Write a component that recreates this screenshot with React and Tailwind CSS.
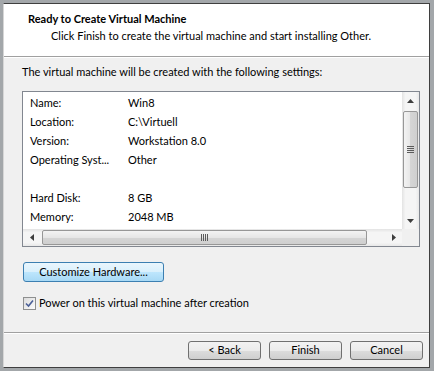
import React from 'react';

const settings = [
  ['Name:', 'Win8'],
  ['Location:', 'C:\\Virtuell'],
  ['Version:', 'Workstation 8.0'],
  ['Operating Syst...', 'Other'],
  ['', ''],
  ['Hard Disk:', '8 GB'],
  ['Memory:', '2048 MB'],
];

const Arrow = ({ dir }) => {
  // tiny black triangles used by the classic scrollbar buttons
  const paths = {
    up: 'M0 4 L3.5 0 L7 4 Z',
    down: 'M0 0 L7 0 L3.5 4 Z',
    left: 'M4 0 L4 7 L0 3.5 Z',
    right: 'M0 0 L4 3.5 L0 7 Z',
  };
  const vert = dir === 'up' || dir === 'down';
  return (
    <svg width={vert ? 7 : 4} height={vert ? 4 : 7} viewBox={vert ? '0 0 7 4' : '0 0 4 7'}>
      <path d={paths[dir]} fill="#3e3e3e" />
    </svg>
  );
};

const WinButton = ({ children, primary }) => (
  <button
    className={
      primary
        ? 'h-[20px] w-[141px] rounded-[3px] border border-[#3c7fb1] bg-[linear-gradient(#eaf6fd_0%,#d9f0fc_50%,#bee6fd_50%,#a7d9f5_100%)] text-[11px] text-black'
        : 'h-[19px] w-[73px] rounded-[3px] border border-[#707070] bg-[linear-gradient(#f2f2f2_0%,#ebebeb_50%,#dddddd_50%,#cfcfcf_100%)] text-[11px] text-black'
    }
  >
    {children}
  </button>
);

export default function App() {
  return (
    <div
      className="w-[434px] h-[371px] overflow-hidden bg-[#a3a7aa] pt-[3px] pl-[3px] pr-[4px] pb-[3px]"
      style={{ fontFamily: 'Lato, "Noto Sans", sans-serif' }}
    >
      <div className="flex h-full flex-col border-t border-r border-b border-l border-t-[#3f3f3f] border-r-[#3f3f3f] border-b-[#3f3f3f] border-l-[#d6d6d6] bg-[#f0f0f0]">
        {/* header */}
        <div className="h-[52px] bg-white pl-[24px] pt-[7px]">
          <div className="text-[11px] font-bold leading-[16px] text-black">Ready to Create Virtual Machine</div>
          <div className="mt-[1px] pl-[23px] text-[11px] leading-[16px] text-black">
            Click Finish to create the virtual machine and start installing Other.
          </div>
        </div>
        <div className="h-px bg-[#a0a0a0]" />
        <div className="h-px bg-white" />

        {/* body */}
        <div className="flex flex-1 flex-col pl-[18px] pt-[6px]">
          <div className="text-[11px] leading-[16px] text-black">
            The virtual machine will be created with the following settings:
          </div>

          <div className="mt-[11px] h-[156px] w-[398px] border border-[#828790] bg-white">
            <div className="grid h-full grid-cols-[379px_17px] grid-rows-[137px_17px]">
              <div className="overflow-hidden pl-[7px] pt-[2px]">
                {settings.map(([k, v], i) => (
                  <div key={i} className="flex h-[19px] items-center text-[11px] text-black">
                    <span className="w-[98px] shrink-0">{k}</span>
                    <span>{v}</span>
                  </div>
                ))}
              </div>

              {/* vertical scrollbar */}
              <div className="flex flex-col bg-[linear-gradient(90deg,#e3e3e3,#f5f5f5_20%,#f5f5f5_80%,#e8e8e8)]">
                <div className="flex h-[17px] items-center justify-center">
                  <Arrow dir="up" />
                </div>
                <div className="mx-[1px] mt-[2px] flex h-[77px] items-center justify-center rounded-[2px] border border-[#979797] bg-[linear-gradient(90deg,#f3f3f3,#e6e6e6_50%,#d5d5d5_50%,#cfcfcf)]">
                  <div className="flex flex-col gap-[1px]">
                    <div className="h-px w-[7px] bg-[#5b5b5b]" />
                    <div className="h-px w-[7px] bg-[#5b5b5b]" />
                    <div className="h-px w-[7px] bg-[#5b5b5b]" />
                    <div className="h-px w-[7px] bg-[#5b5b5b]" />
                  </div>
                </div>
                <div className="flex-1" />
                <div className="flex h-[17px] items-center justify-center">
                  <Arrow dir="down" />
                </div>
              </div>

              {/* horizontal scrollbar */}
              <div className="flex items-stretch bg-[linear-gradient(#e3e3e3,#f5f5f5_20%,#f5f5f5_80%,#e8e8e8)]">
                <div className="flex w-[17px] items-center justify-center">
                  <Arrow dir="left" />
                </div>
                <div className="my-[1px] ml-[2px] flex w-[325px] items-center justify-center rounded-[2px] border border-[#979797] bg-[linear-gradient(#f3f3f3,#e6e6e6_50%,#d5d5d5_50%,#cfcfcf)]">
                  <div className="flex gap-[1px]">
                    <div className="h-[7px] w-px bg-[#5b5b5b]" />
                    <div className="h-[7px] w-px bg-[#5b5b5b]" />
                    <div className="h-[7px] w-px bg-[#5b5b5b]" />
                    <div className="h-[7px] w-px bg-[#5b5b5b]" />
                  </div>
                </div>
                <div className="flex-1" />
                <div className="flex w-[17px] items-center justify-center">
                  <Arrow dir="right" />
                </div>
              </div>
              <div className="bg-[#f0f0f0]" />
            </div>
          </div>

          <div className="mt-[15px] ml-[1px] flex">
            <WinButton primary>Customize Hardware...</WinButton>
          </div>

          <label className="mt-[14px] ml-[1px] flex items-center gap-[3px] text-[11px] leading-[14px] text-black">
            <span className="flex h-[13px] w-[13px] items-center justify-center border border-[#8e8f8f] bg-[linear-gradient(135deg,#dcdcdc,#fbfbfb)]">
              <svg width="9" height="9" viewBox="0 0 9 9">
                <path d="M1 4.5 L3.5 7 L8 1.5" fill="none" stroke="#4a5f97" strokeWidth="1.6" />
              </svg>
            </span>
            Power on this virtual machine after creation
          </label>
        </div>

        {/* footer */}
        <div className="h-px bg-[#a0a0a0]" />
        <div className="h-px bg-white" />
        <div className="flex h-[33px] justify-end gap-[8px] pr-[6px] pt-[7px]">
          <WinButton>&lt; Back</WinButton>
          <WinButton>Finish</WinButton>
          <WinButton>Cancel</WinButton>
        </div>
      </div>
    </div>
  );
}
